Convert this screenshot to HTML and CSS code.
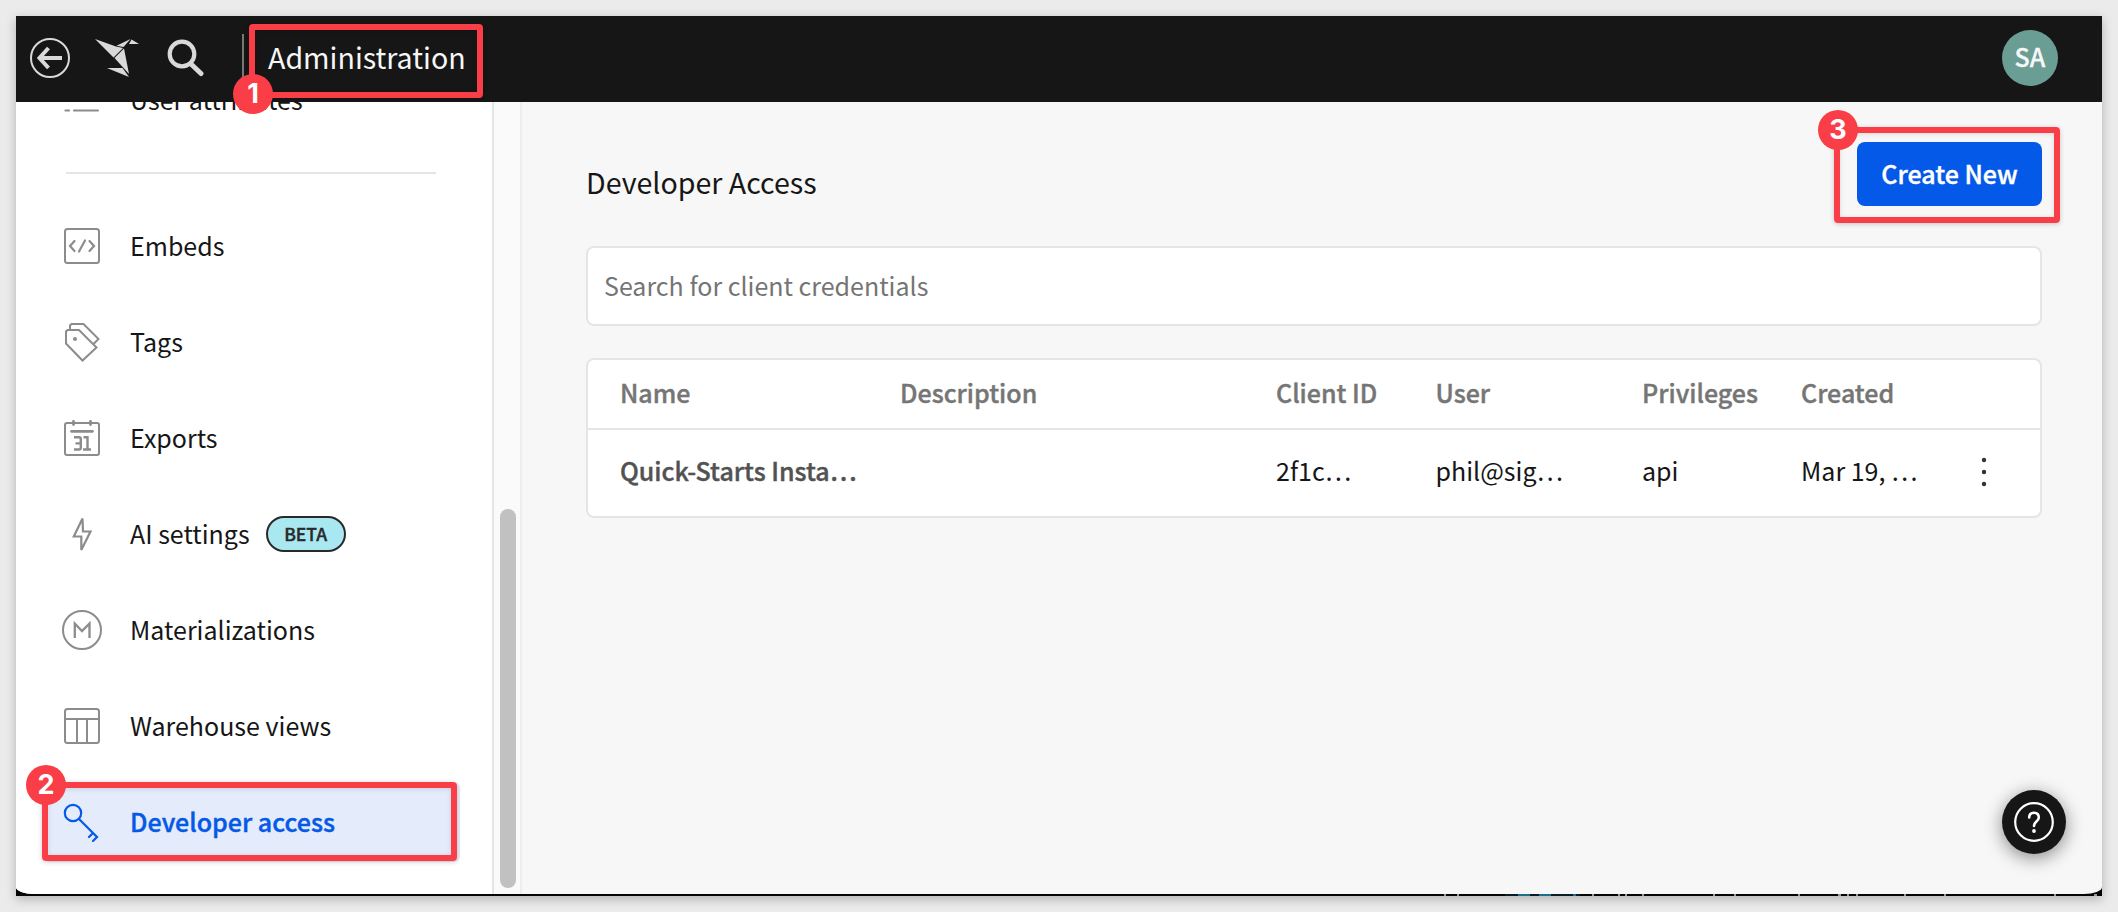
FILE: index.html
```html
<!DOCTYPE html>
<html lang="en">
<head>
<meta charset="utf-8">
<title>Administration</title>
<link rel="stylesheet" href="styles.css">
</head>
<body>
<div class="window">
  <header class="topbar">
    <svg class="icon-back" viewBox="0 0 40 40" fill="none" stroke="#d9d9d9"><circle cx="20" cy="20" r="19" stroke-width="2"/><path d="M32 20H9.500M18.500 10 9.500 20l9 10" stroke-width="4"/></svg>
    <svg class="icon-bird" viewBox="0 0 44 40" fill="#d9d9d9"><path d="M0 1 21 8.500 28 10 18.500 19.500z"/><path d="M21.500 7.700 35.500 1 28.500 9z"/><path d="M36.500 1.500 44 6H34z"/><path d="M29 10.500 34 36 19.500 20z"/><path d="M12 30H27.500L34 39z"/></svg>
    <svg class="icon-search" viewBox="0 0 38 38" fill="none" stroke="#d9d9d9"><circle cx="15" cy="15" r="12.300" stroke-width="4.200"/><path d="M24 25 34 34.500" stroke-width="5" stroke-linecap="round"/></svg>
    <div class="topbar-rule"></div>
    <h1 class="topbar-title">Administration</h1>
    <div class="avatar">SA</div>
  </header>
  <div class="body">
    <nav class="sidebar">
      <a class="item item-first"><svg class="icon" viewBox="0 0 40 40" fill="none" stroke="#8c8c8c" stroke-width="2.200" stroke-linecap="round"><path d="M3.500 30.500h3.500M12 30.500h24"/></svg><span>User attributes</span></a>
      <div class="divider"></div>
      <a class="item"><svg class="icon" viewBox="0 0 40 40" fill="none" stroke="#8c8c8c" stroke-width="2"><rect x="3" y="3" width="34" height="34" rx="2.500"/><path d="M12.500 15 8 20l4.500 5M27.500 15l4.500 5-4.500 5M23 14.500 17 25.500" stroke-width="2.200" stroke-linecap="round"/></svg><span>Embeds</span></a>
      <a class="item"><svg class="icon" viewBox="0 0 40 40" fill="none" stroke="#8c8c8c" stroke-width="2"><path d="M4 9.500 5.500 8H17L34.500 25.500 20.500 38.500 4 21.500zM8 8V3.500L9.500 2H21.500L36.500 17 31.500 22"/><circle cx="13" cy="17" r="2" fill="#8c8c8c" stroke="none"/></svg><span>Tags</span></a>
      <a class="item"><svg class="icon" viewBox="0 0 40 40" fill="none" stroke="#8c8c8c" stroke-width="2"><rect x="3" y="5" width="34" height="32" rx="2"/><path d="M11.500 3.500v3M28.500 3.500v3M9.500 13.300h21" stroke-width="2.800" stroke-linecap="round"/><path d="M12 19.300h5q1.800 0 1.800 1.800v8.600q0 1.800-1.800 1.800h-5M13.500 25.400h5M21.500 19.300h4v12M21 31.500h8" stroke-width="2.400"/></svg><span>Exports</span></a>
      <a class="item"><svg class="icon" viewBox="0 0 40 40" fill="none" stroke="#8c8c8c" stroke-width="2.200"><path d="M20.500 4.500 11.800 22.500H19.300V36L28.500 17.500H21z"/></svg><span>AI settings</span><span class="beta">BETA</span></a>
      <a class="item"><svg class="icon" viewBox="0 0 40 40" fill="none" stroke="#8c8c8c" stroke-width="2"><circle cx="20" cy="20" r="19"/><path d="M12.800 28V13.500L20 21l7.500-7.500V28" stroke-width="2.300"/></svg><span>Materializations</span></a>
      <a class="item"><svg class="icon" viewBox="0 0 40 40" fill="none" stroke="#8c8c8c" stroke-width="2"><rect x="3" y="3" width="34" height="34" rx="2.500"/><path d="M3 13h34M15 13v24M25 13v24"/></svg><span>Warehouse views</span></a>
      <a class="item item-active"><svg class="icon" viewBox="0 0 40 40" fill="none" stroke="#0559e8" stroke-width="2.200"><circle cx="11" cy="11" r="8.200"/><path d="M17 17 35 35 31 39M31 31 27 35" stroke-linecap="round"/></svg><span>Developer access</span></a>
    </nav>
    <div class="scrolltrack"><div class="thumb"></div></div>
    <main class="main">
      <div class="heading"><h2 class="title">Developer Access</h2><button class="create">Create New</button></div>
      <div class="search">Search for client credentials</div>
      <div class="table">
        <div class="row row-head"><span>Name</span><span>Description</span><span>Client ID</span><span>User</span><span>Privileges</span><span>Created</span><span></span></div>
        <div class="row"><span class="name">Quick-Starts Insta…</span><span></span><span>2f1c…</span><span>phil@sig…</span><span>api</span><span>Mar 19, …</span><svg class="more" viewBox="0 0 8 30" fill="#333"><circle cx="4" cy="3" r="2.200"/><circle cx="4" cy="15" r="2.200"/><circle cx="4" cy="27" r="2.200"/></svg></div>
      </div>
    </main>
  </div>
  <svg class="strip" viewBox="0 0 2086 2"><path d="M1489 0h75v2h-75z" fill="#0b1c24"/><path d="M1502 1h12M1523 1h12M1557 1h3" stroke="#1f6f8c" stroke-width="2"/><path d="M1428 1h2M1441 1h2M1576 1h2M1602 1h2M1609 1h2M1626 1h2M1697 1h2M1718 1h2M1782 1h2M1822 1h3M1831 1h2M1840 1h2M1888 1h2M1928 1h2M2038 1h2M2078 1h3" stroke="#999" stroke-width="2"/></svg>
</div>
<div class="help"><svg viewBox="0 0 40 40" fill="none" stroke="#fff"><circle cx="20" cy="20" r="18.800" stroke-width="2.200"/><path d="M15.200 15.500q0-4.800 4.800-4.800t4.800 4.800q0 2-2.400 4T20 24" stroke-width="2.600" stroke-linecap="round"/><circle cx="20" cy="29" r="1.900" fill="#fff" stroke="none"/></svg></div>
<div class="callout callout-1"><b class="num">1</b></div>
<div class="callout callout-2"><b class="num">2</b></div>
<div class="callout callout-3"><b class="num">3</b></div>
</body>
</html>
```
FILE: styles.css
```css
* { box-sizing: border-box; }
body { margin: 0; padding: 16px; height: 912px; overflow: hidden; position: relative; background: #ebebeb; color: #161616; font: 400 25px/40px "Noto Sans CJK SC", "Noto Sans", sans-serif; }
h1, h2 { margin: 0; font-weight: 400; }
.window { height: 880px; width: 2086px; background: #050505; display: flex; flex-direction: column; box-shadow: 0 3px 10px rgba(0,0,0,.25); }
.topbar { height: 86px; flex: none; background: #161616; display: flex; align-items: center; padding: 0 44px 2px 14px; position: relative; }
.icon-back { width: 40px; height: 40px; }
.icon-bird { width: 44px; height: 40px; margin-left: 25px; }
.icon-search { width: 38px; height: 38px; margin-left: 28px; }
.topbar-rule { width: 2px; height: 48px; background: #777; margin-left: 37px; }
.topbar-title { font-size: 28.6px; color: #f7f7f7; margin-left: 24px; padding-bottom: 2px; }
.avatar { margin-left: auto; width: 56px; height: 56px; border-radius: 50%; background: #6a9d94; color: #f7f7f7; font-weight: 500; font-size: 25px; line-height: 53px; text-align: center; -webkit-text-stroke: .3px; }
.body { height: 792px; display: flex; overflow: hidden; background: #f7f7f7; border-radius: 0 0 18px 18px / 0 0 7px 7px; }
.strip { display: block; width: 2086px; height: 2px; }
.sidebar { width: 478px; background: #fff; border-right: 2px solid #e5e5e5; padding: 0 32px 0 28px; margin-top: -42px; flex: none; }
.item { height: 80px; margin-bottom: 16px; display: flex; align-items: center; padding-left: 18px; white-space: nowrap; border-radius: 6px; }
.item span:not(.beta) { padding-bottom: 2px; }
.item-first { margin-bottom: 32px; }
.divider { height: 2px; background: #e5e5e5; margin: 0 24px 32px 22px; }
.icon { width: 40px; height: 40px; flex: none; margin-right: 28px; }
.beta { margin-left: 16px; width: 80px; height: 36px; border: 2px solid #292929; border-radius: 18px; background: #aae8f1; color: #292929; font-size: 17.5px; font-weight: 500; line-height: 32px; text-align: center; -webkit-text-stroke: .4px; }
.item-active { background: #e4ebfa; color: #0559e8; font-weight: 500; -webkit-text-stroke: .4px; }
.scrolltrack { width: 28px; flex: none; background: #fafafa; border-right: 2px solid #ededed; padding: 407px 4px 0 6px; }
.thumb { width: 16px; height: 379px; border-radius: 8px; background: #c1c1c1; }
.main { flex: 1; padding: 40px 60px 0 64px; }
.heading { display: flex; justify-content: space-between; height: 104px; }
.title { font-size: 28.6px; padding-top: 20px; }
.create { width: 185px; height: 64px; border: 0; border-radius: 8px; background: #0559e8; color: #fff; font: inherit; font-weight: 500; padding: 0 0 2px; -webkit-text-stroke: .4px; }
.search { height: 80px; border: 2px solid #e5e5e5; border-radius: 8px; background: #fff; padding: 17px 16px; color: #757575; }
.table { margin-top: 32px; height: 160px; border: 2px solid #e5e5e5; border-radius: 8px; background: #fff; }
.row { display: grid; grid-template-columns: 280px 376px 159.5px 206.5px 159px 179px 1fr; align-items: center; padding-left: 32px; height: 84px; }
.row span { padding-bottom: 4px; }
.row-head { height: 70px; border-bottom: 2px solid #e5e5e5; color: #757575; font-weight: 500; -webkit-text-stroke: .4px; }
.row-head span { padding-bottom: 5px; }
.name { color: #525252; font-weight: 500; -webkit-text-stroke: .4px; }
.more { width: 8px; height: 30px; }
.help { position: absolute; left: 2002px; top: 790px; width: 64px; height: 64px; border-radius: 50%; background: #161616; padding: 12px; box-shadow: 0 4px 18px rgba(0,0,0,.45); }
.help svg { display: block; width: 40px; height: 40px; }
.callout { position: absolute; border: 6px solid #f93e48; border-radius: 4px; box-shadow: 0 1px 5px rgba(0,0,0,.2), inset 0 1px 5px rgba(0,0,0,.12); }
.num { position: absolute; width: 40px; height: 40px; border-radius: 50%; background: #f93e48; color: #fff; font: 700 27px/39px Inter, sans-serif; text-align: center; }
.callout-1 { left: 249px; top: 24px; width: 234px; height: 74px; }
.callout-1 .num { left: -22px; top: 44px; }
.callout-2 { left: 42px; top: 782px; width: 415px; height: 79px; }
.callout-2 .num { left: -22px; top: -23px; }
.callout-3 { left: 1834px; top: 127px; width: 226px; height: 96px; }
.callout-3 .num { left: -22px; top: -23px; }
```
